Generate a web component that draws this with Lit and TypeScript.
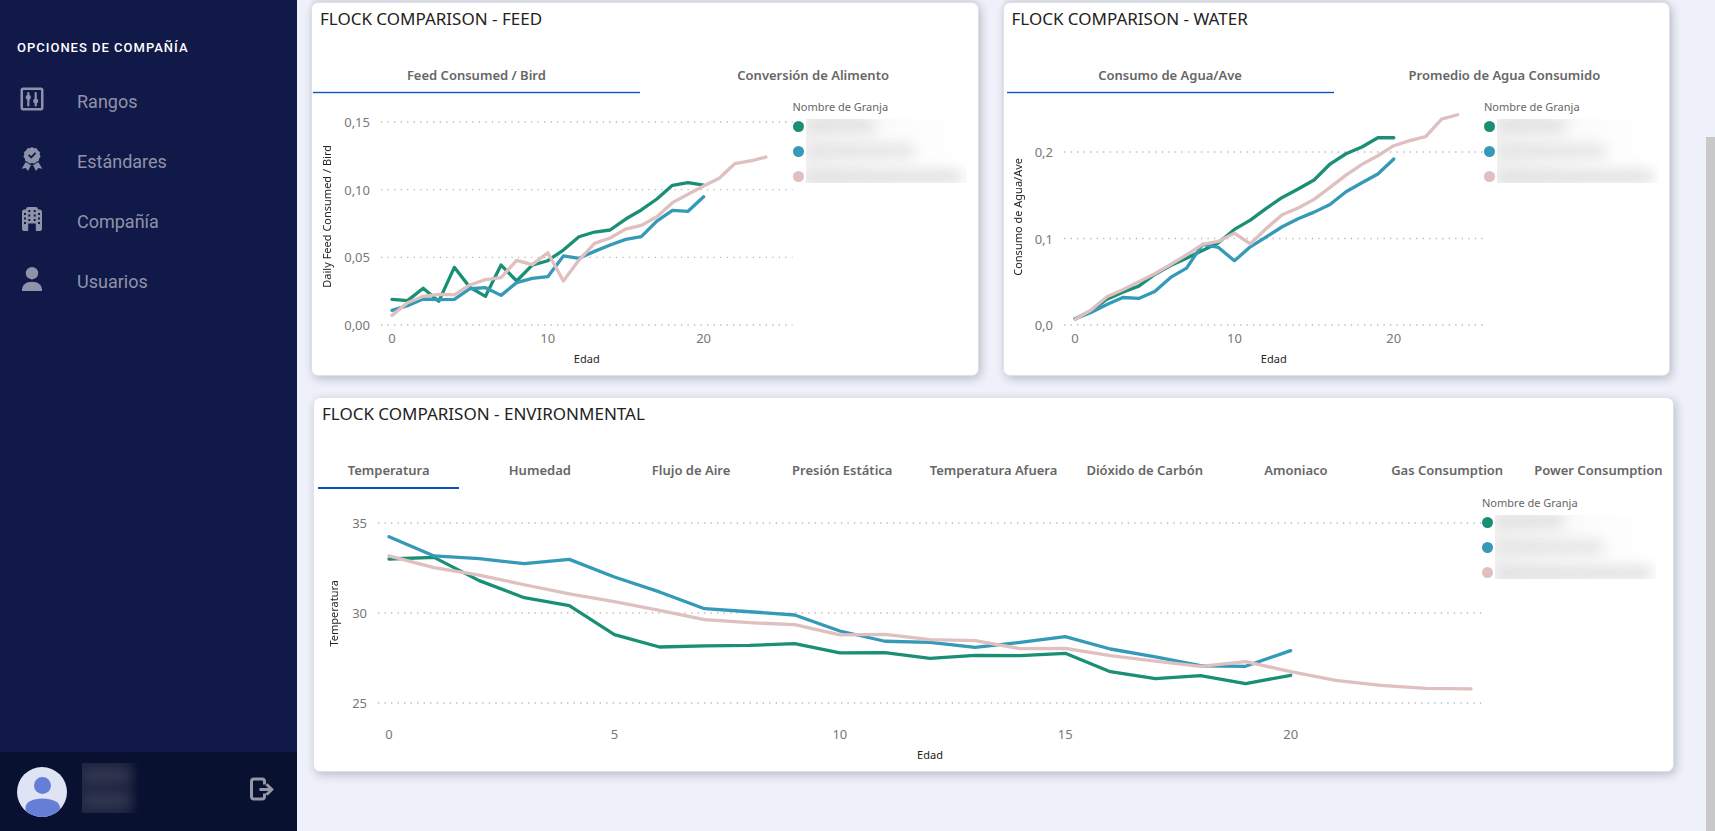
import { LitElement, html, svg, css, nothing } from "lit";
import { customElement, property, state } from "lit/decorators.js";
import { classMap } from "lit/directives/class-map.js";

interface Series {
  color: string;
  values: number[];
}

interface Panel {
  title: string;
  tabs: string[];
  yTitle: string;
  yMin: number;
  yMax: number;
  yTicks: { value: number; label: string }[];
  xMax: number;
  xTicks: number[];
  series: Series[];
}

const GREEN = "#1a8f75";
const BLUE = "#3599b8";
const PINK = "#dfbfbf";

const FEED: Panel = {
  title: "FLOCK COMPARISON - FEED",
  tabs: ["Feed Consumed / Bird", "Conversión de Alimento"],
  yTitle: "Daily Feed Consumed / Bird",
  yMin: 0,
  yMax: 0.15,
  yTicks: [
    { value: 0.15, label: "0,15" },
    { value: 0.1, label: "0,10" },
    { value: 0.05, label: "0,05" },
    { value: 0, label: "0,00" },
  ],
  xMax: 25,
  xTicks: [0, 10, 20],
  series: [
    { color: GREEN, values: [0.019, 0.018, 0.0271, 0.0175, 0.0426, 0.0278, 0.0212, 0.0443, 0.0325, 0.0443, 0.0475, 0.0554, 0.0652, 0.0687, 0.0702, 0.0783, 0.085, 0.0931, 0.1032, 0.1052, 0.1034] },
    { color: BLUE, values: [0.0108, 0.0143, 0.0192, 0.0187, 0.019, 0.0268, 0.0276, 0.0219, 0.0313, 0.0345, 0.0357, 0.051, 0.0493, 0.0544, 0.0591, 0.0633, 0.0653, 0.0768, 0.0847, 0.084, 0.0948] },
    { color: PINK, values: [0.0071, 0.0165, 0.0212, 0.0227, 0.0222, 0.0296, 0.0335, 0.035, 0.0478, 0.0446, 0.0534, 0.0325, 0.048, 0.0603, 0.0643, 0.0709, 0.0736, 0.08, 0.0904, 0.0966, 0.1027, 0.1084, 0.1192, 0.1212, 0.1241] },
  ],
};

const WATER: Panel = {
  title: "FLOCK COMPARISON - WATER",
  tabs: ["Consumo de Agua/Ave", "Promedio de Agua Consumido"],
  yTitle: "Consumo de Agua/Ave",
  yMin: 0,
  yMax: 0.2347,
  yTicks: [
    { value: 0.2, label: "0,2" },
    { value: 0.1, label: "0,1" },
    { value: 0, label: "0,0" },
  ],
  xMax: 25,
  xTicks: [0, 10, 20],
  series: [
    { color: GREEN, values: [0.0071, 0.0164, 0.0299, 0.038, 0.0449, 0.0584, 0.0688, 0.0773, 0.0862, 0.0951, 0.1105, 0.1213, 0.1348, 0.1475, 0.1572, 0.1676, 0.1861, 0.198, 0.2058, 0.2165, 0.2165] },
    { color: BLUE, values: [0.0071, 0.0145, 0.0237, 0.0318, 0.0307, 0.0388, 0.055, 0.0658, 0.0931, 0.0897, 0.0742, 0.0904, 0.102, 0.1136, 0.1228, 0.1305, 0.1394, 0.1541, 0.1645, 0.1745, 0.1919] },
    { color: PINK, values: [0.0064, 0.0172, 0.0326, 0.0407, 0.0499, 0.0592, 0.07, 0.0812, 0.0931, 0.0966, 0.1062, 0.0939, 0.1116, 0.1275, 0.1352, 0.1452, 0.1591, 0.1733, 0.1857, 0.1957, 0.2073, 0.2131, 0.2177, 0.2381, 0.2431] },
  ],
};

const ENVIRONMENT: Panel = {
  title: "FLOCK COMPARISON - ENVIRONMENTAL",
  tabs: ["Temperatura", "Humedad", "Flujo de Aire", "Presión Estática", "Temperatura Afuera", "Dióxido de Carbón", "Amoniaco", "Gas Consumption", "Power Consumption"],
  yTitle: "Temperatura",
  yMin: 25,
  yMax: 35,
  yTicks: [
    { value: 35, label: "35" },
    { value: 30, label: "30" },
    { value: 25, label: "25" },
  ],
  xMax: 24,
  xTicks: [0, 5, 10, 15, 20],
  series: [
    { color: GREEN, values: [33.0, 33.09, 31.8, 30.85, 30.41, 28.8, 28.11, 28.17, 28.2, 28.3, 27.78, 27.8, 27.48, 27.65, 27.63, 27.76, 26.74, 26.35, 26.52, 26.07, 26.54] },
    { color: BLUE, values: [34.24, 33.17, 33.02, 32.74, 32.98, 32.0, 31.17, 30.24, 30.07, 29.89, 29.0, 28.43, 28.37, 28.09, 28.37, 28.69, 28.0, 27.56, 27.07, 27.04, 27.91] },
    { color: PINK, values: [33.17, 32.52, 32.11, 31.57, 31.06, 30.63, 30.15, 29.63, 29.46, 29.35, 28.78, 28.81, 28.52, 28.46, 28.02, 28.04, 27.63, 27.33, 27.04, 27.3, 26.74, 26.26, 25.98, 25.81, 25.78] },
  ],
};

@customElement("flock-panel")
export class FlockPanel extends LitElement {
  @property({ attribute: false }) panel!: Panel;
  @property({ reflect: true }) variant = "compact";
  @state() private active = 0;

  static styles = css`
    :host {
      --plot-top: 24px;
      --plot-height: 203px;
      --body-pad: 4px;
      --tick-gap: 3px;
      --title-lift: 14px;
      --title-left: 8px;
      --tabs-pad: 0 1px 0 1px;
      --tab-gap: 10px;
      --axis: 30px 28px;
      --legend: 185px;
      --bar: 1px;
      --bar-glow: #cfe0f7;
      display: block;
      box-sizing: border-box;
      min-width: 0;
      background: #fff;
      border: 1px solid #e0e1e3;
      border-radius: 7px;
      box-shadow: 2px 3px 10px rgba(20, 30, 40, 0.24), 0 -3px 3px rgba(20, 30, 40, 0.06);
      font-family: "Noto Sans", "Open Sans", sans-serif;
    }
    :host([variant="water"]) {
      --tabs-pad: 0 1px 0 3px;
      --tab-gap: 7px;
      --axis: 28px 21px;
    }
    :host([variant="wide"]) {
      --plot-top: 29px;
      --plot-height: 180px;
      --body-pad: 5px;
      --tick-gap: 21px;
      --title-lift: 0px;
      --tabs-pad: 0 4px 0 4px;
      --axis: 40px 13px;
      --legend: 191px;
      --bar: 2px;
      --bar-glow: transparent;
      box-shadow: 2px 3px 10px rgba(20, 30, 40, 0.24);
    }
    .title {
      margin: 0;
      padding-left: var(--title-left);
      font-size: 17px;
      line-height: 32px;
      font-weight: 400;
      color: #222;
      white-space: nowrap;
    }
    .tabs {
      display: grid;
      grid-auto-flow: column;
      grid-auto-columns: minmax(0, 1fr);
      gap: var(--tab-gap);
      padding: var(--tabs-pad);
      margin-top: 26px;
    }
    .tab {
      display: flex;
      justify-content: center;
      height: 33px;
      padding: 4px 0 0;
      border: 0;
      background: none;
      font: 600 13px/20px "Noto Sans", "Open Sans", sans-serif;
      color: #666;
      white-space: nowrap;
      cursor: pointer;
      background-repeat: no-repeat;
    }
    .tab.active {
      background-image: linear-gradient(#0a52b8, #0a52b8), linear-gradient(var(--bar-glow), var(--bar-glow));
      background-size: 100% var(--bar), 100% 3px;
      background-position: 0 31px, 0 100%;
    }
    .body {
      display: grid;
      grid-template-columns: var(--axis) minmax(0, 1fr) var(--legend);
      grid-template-rows: var(--plot-height) auto auto;
      padding-top: calc(var(--plot-top) + var(--body-pad));
    }
    .ytitle {
      grid-area: 1 / 1;
      writing-mode: vertical-rl;
      transform: rotate(180deg);
      justify-self: center;
      align-self: center;
      padding-top: var(--title-lift);
      font-size: 11px;
      line-height: 16px;
      color: #252423;
      white-space: nowrap;
    }
    svg {
      display: block;
      overflow: visible;
      width: 100%;
      height: 100%;
    }
    .tick {
      font-size: 13px;
      fill: #777;
    }
    .yaxis {
      grid-area: 1 / 2;
    }
    .plot {
      grid-area: 1 / 3;
      display: grid;
      margin-left: 11px;
    }
    .layer {
      grid-area: 1 / 1;
    }
    .lines {
      padding: 0 11px;
      min-width: 0;
      min-height: 0;
    }
    .xaxis {
      grid-area: 2 / 3;
      height: 20px;
      margin-top: var(--tick-gap);
      padding: 0 11px 0 22px;
    }
    .xtitle {
      grid-area: 3 / 3;
      margin-left: 11px;
      padding: 3px 0 8px;
      text-align: center;
      font-size: 11px;
      line-height: 16px;
      color: #252423;
    }
    .legend {
      grid-area: 1 / 4 / 4 / 5;
      display: grid;
      grid-template-columns: 13px 161px;
      grid-template-rows: 16px 25px 25px 25px;
      align-content: start;
      margin-top: calc(-1 * var(--plot-top));
    }
    .legend-title {
      grid-column: 1 / 3;
      font-size: 11px;
      line-height: 18px;
      color: #666;
      white-space: nowrap;
    }
    .dot {
      grid-column: 1;
      align-self: center;
      width: 11px;
      height: 11px;
      border-radius: 50%;
    }
    .names {
      grid-area: 2 / 2 / 5 / 3;
      display: flex;
      flex-direction: column;
      justify-content: space-between;
      height: 64px;
      margin-top: 5px;
      overflow: hidden;
      background: linear-gradient(90deg, #f4f4f4, #fcfcfc 60%, #fff);
    }
    .name {
      height: 12px;
      background: #dcdcdc;
      filter: blur(7px);
    }
    .name.a { width: 68px; }
    .name.b { width: 108px; height: 10px; }
    .name.c { width: 156px; }
  `;

  private pct(value: number) {
    const { yMin, yMax } = this.panel;
    return (1 - (value - yMin) / (yMax - yMin)) * 100;
  }

  render() {
    const p = this.panel;
    if (!p) return nothing;
    return html`
      <h2 class="title">${p.title}</h2>
      <div class="tabs" role="tablist" aria-label=${p.title}>
        ${p.tabs.map(
          (t, i) => html`<button
            type="button"
            role="tab"
            aria-selected=${i === this.active ? "true" : "false"}
            class=${classMap({ tab: true, active: i === this.active })}
            @click=${() => (this.active = i)}
          >${t}</button>`
        )}
      </div>
      <div class="body">
        <div class="ytitle">${p.yTitle}</div>
        <div class="yaxis">
          <svg aria-hidden="true">
            ${p.yTicks.map((t) => svg`<text class="tick" x="100%" y="${this.pct(t.value)}%" dy="5" text-anchor="end">${t.label}</text>`)}
          </svg>
        </div>
        <div class="plot">
          <div class="layer">
            <svg aria-hidden="true">
              ${p.yTicks.map(
                (t) => svg`<line x1="0" x2="100%" y1="${this.pct(t.value)}%" y2="${this.pct(t.value)}%" stroke="#b8b8b8" stroke-width="1.3" stroke-dasharray="1.3 5.22" />`
              )}
            </svg>
          </div>
          <div class="layer lines">
            <svg viewBox="0 0 ${p.xMax} 100" preserveAspectRatio="none" role="img" aria-label=${p.yTitle}>
              ${p.series.map(
                (s) => svg`<polyline fill="none" stroke="${s.color}" stroke-width="3.3" stroke-linejoin="round" stroke-linecap="round" vector-effect="non-scaling-stroke"
                  points="${s.values.map((v, i) => `${i},${this.pct(v)}`).join(" ")}" />`
              )}
            </svg>
          </div>
        </div>
        <div class="xaxis">
          <svg aria-hidden="true">
            ${p.xTicks.map((t) => svg`<text class="tick" x="${(t / p.xMax) * 100}%" y="15" text-anchor="middle">${t}</text>`)}
          </svg>
        </div>
        <div class="xtitle">Edad</div>
        <div class="legend">
          <div class="legend-title">Nombre de Granja</div>
          ${p.series.map((s) => html`<span class="dot" style="background:${s.color}"></span>`)}
          <div class="names">
            <span class="name a"></span><span class="name b"></span><span class="name c"></span>
          </div>
        </div>
      </div>
    `;
  }
}

const ICONS = {
  ranges: svg`
    <rect x="1.75" y="1.75" width="20.5" height="20.5" rx="1.5" fill="none" stroke="currentColor" stroke-width="2.5" />
    <path d="M8.3 6v12.4M15.7 6v12.4" stroke="currentColor" stroke-width="2.2" stroke-linecap="round" />
    <circle cx="8.3" cy="10.2" r="2.5" fill="currentColor" /><circle cx="15.7" cy="14" r="2.5" fill="currentColor" />`,
  award: svg`
    <path fill="currentColor" d="M12 0l2.2 1.2 2.5.1 1.1 2.2 2.1 1.4-.2 2.5.9 2.3-1.5 2-.4 2.4-2.4.8-1.8 1.7-2.5-.5-2.5.5-1.8-1.7-2.4-.8-.4-2.4-1.5-2 .9-2.3-.2-2.5 2.1-1.4 1.1-2.2 2.5-.1z" />
    <path d="M8.6 7.8l2.6 2.6 4.4-4.5" fill="none" stroke="#111948" stroke-width="1.9" />
    <path fill="currentColor" d="M5.6 15.2l2 .8 1.9 1.7 1.8-.2L8 24l-2.3-2.9-4 .6zM18.4 15.2l-2 .8-1.9 1.7-1.8-.2L16 24l2.3-2.9 4 .6z" />`,
  building: svg`
    <path fill="currentColor" d="M4.500 2.500H6C6 .8 7 0 8.500 0h7C17 0 18 .8 18 2.500h1.500c1.700 0 2.500.9 2.500 2.500v17c0 1.300-.7 2-2 2h-4.200v-7.500H8.200V24H4c-1.300 0-2-.7-2-2V5c0-1.600.8-2.500 2.500-2.500z" />
    <path fill="#111948" d="M8.300 3h2v2h-2zM13.700 3h2v2h-2zM4 6h2v2H4zM18 6h2v2h-2zM8.300 7.500h2v2h-2zM13.700 7.500h2v2h-2zM4 10.500h2v2H4zM18 10.500h2v2h-2zM8.300 12h2v2h-2zM13.700 12h2v2h-2zM4 15h2v2H4zM18 15h2v2h-2z" />`,
  user: svg`
    <circle cx="12" cy="6.200" r="6.200" fill="currentColor" />
    <path fill="currentColor" d="M2 24v-1c0-4.800 4-8.200 10-8.200S22 18.200 22 23v1z" />`,
};

@customElement("app-root")
export class AppRoot extends LitElement {
  static styles = css`
    :host {
      display: flex;
      height: 100vh;
      overflow: hidden;
      background: #eef1fa;
      font-family: Roboto, "Noto Sans", sans-serif;
    }
    .sidebar {
      flex: 0 0 297px;
      display: flex;
      flex-direction: column;
      background: #111948;
      color: #8f93aa;
    }
    .heading {
      margin: 0;
      padding: 38px 17px 0;
      font-size: 13px;
      line-height: 20px;
      font-weight: 500;
      letter-spacing: 1px;
      color: #fff;
    }
    .menu {
      flex: 1;
      display: flex;
      flex-direction: column;
      padding: 14px 20px 0;
    }
    .item {
      display: flex;
      align-items: center;
      gap: 33px;
      height: 60px;
      color: inherit;
      text-decoration: none;
      font-size: 18px;
      line-height: 24px;
    }
    .icon {
      width: 24px;
      height: 26px;
      margin-bottom: 6px;
    }
    .account {
      display: flex;
      align-items: center;
      height: 79px;
      padding: 0 22px 0 17px;
      background: #08112f;
    }
    .avatar {
      width: 50px;
      height: 50px;
    }
    .who {
      display: flex;
      flex-direction: column;
      justify-content: space-around;
      width: 56px;
      height: 50px;
      margin: 0 auto 8px 15px;
      overflow: hidden;
      background: linear-gradient(90deg, #1c233f, #171e3a 80%, #08112f);
    }
    .who-line {
      width: 48px;
      height: 13px;
      background: #3a3e57;
      filter: blur(7px);
    }
    .logout {
      display: flex;
      padding: 0;
      margin-bottom: 6px;
      border: 0;
      background: none;
      color: #9698a8;
      cursor: pointer;
    }
    .main {
      flex: 1;
      min-width: 0;
      display: flex;
      flex-direction: column;
      gap: 21px;
      padding: 2px 32px 0 14px;
    }
    .pair {
      display: grid;
      grid-template-columns: repeat(2, minmax(0, 1fr));
      gap: 24px;
      margin-right: 4px;
    }
    .wide {
      margin-left: 2px;
    }
    .scroll {
      flex: 0 0 9px;
      display: flex;
      flex-direction: column;
      justify-content: flex-end;
    }
    .thumb {
      height: 83.5%;
      background: #c8c8c8;
    }
  `;

  render() {
    const items = [
      { label: "Rangos", icon: ICONS.ranges },
      { label: "Estándares", icon: ICONS.award },
      { label: "Compañía", icon: ICONS.building },
      { label: "Usuarios", icon: ICONS.user },
    ];
    return html`
      <aside class="sidebar">
        <h1 class="heading">OPCIONES DE COMPAÑÍA</h1>
        <nav class="menu">
          ${items.map(
            (i) => html`<a class="item" href="#"><svg class="icon" viewBox="0 0 24 24" aria-hidden="true">${i.icon}</svg><span>${i.label}</span></a>`
          )}
        </nav>
        <div class="account">
          <svg class="avatar" viewBox="0 0 50 50" aria-hidden="true">
            <defs><clipPath id="round"><circle cx="25" cy="25" r="25" /></clipPath></defs>
            <g clip-path="url(#round)">
              <rect width="50" height="50" fill="#dfe4f5" />
              <circle cx="25.500" cy="18.500" r="8.500" fill="#667fd6" />
              <path fill="#667fd6" d="M8.500 41c0-6 7-9.500 17-9.500s17.500 3.500 17.500 9.500v9h-34.500z" />
            </g>
          </svg>
          <div class="who"><span class="who-line"></span><span class="who-line"></span></div>
          <button class="logout" type="button" aria-label="Cerrar sesión">
            <svg width="26" height="26" viewBox="0 0 26 26" fill="none" stroke="currentColor" stroke-width="3" aria-hidden="true">
              <path d="M15.500 8.500V5.500c0-1.500-.8-2.500-2.500-2.500H5C3.500 3 2.500 4 2.500 5.500v15C2.500 22 3.500 23 5 23h8c1.700 0 2.500-1 2.500-2.500v-3" />
              <path d="M10.500 13.500H22" />
              <path d="M17.500 8.200l5.300 5.300-5.300 5.300" />
            </svg>
          </button>
        </div>
      </aside>
      <main class="main">
        <div class="pair">
          <flock-panel .panel=${FEED}></flock-panel>
          <flock-panel variant="water" .panel=${WATER}></flock-panel>
        </div>
        <flock-panel class="wide" variant="wide" .panel=${ENVIRONMENT}></flock-panel>
      </main>
      <div class="scroll" aria-hidden="true"><div class="thumb"></div></div>
    `;
  }
}
